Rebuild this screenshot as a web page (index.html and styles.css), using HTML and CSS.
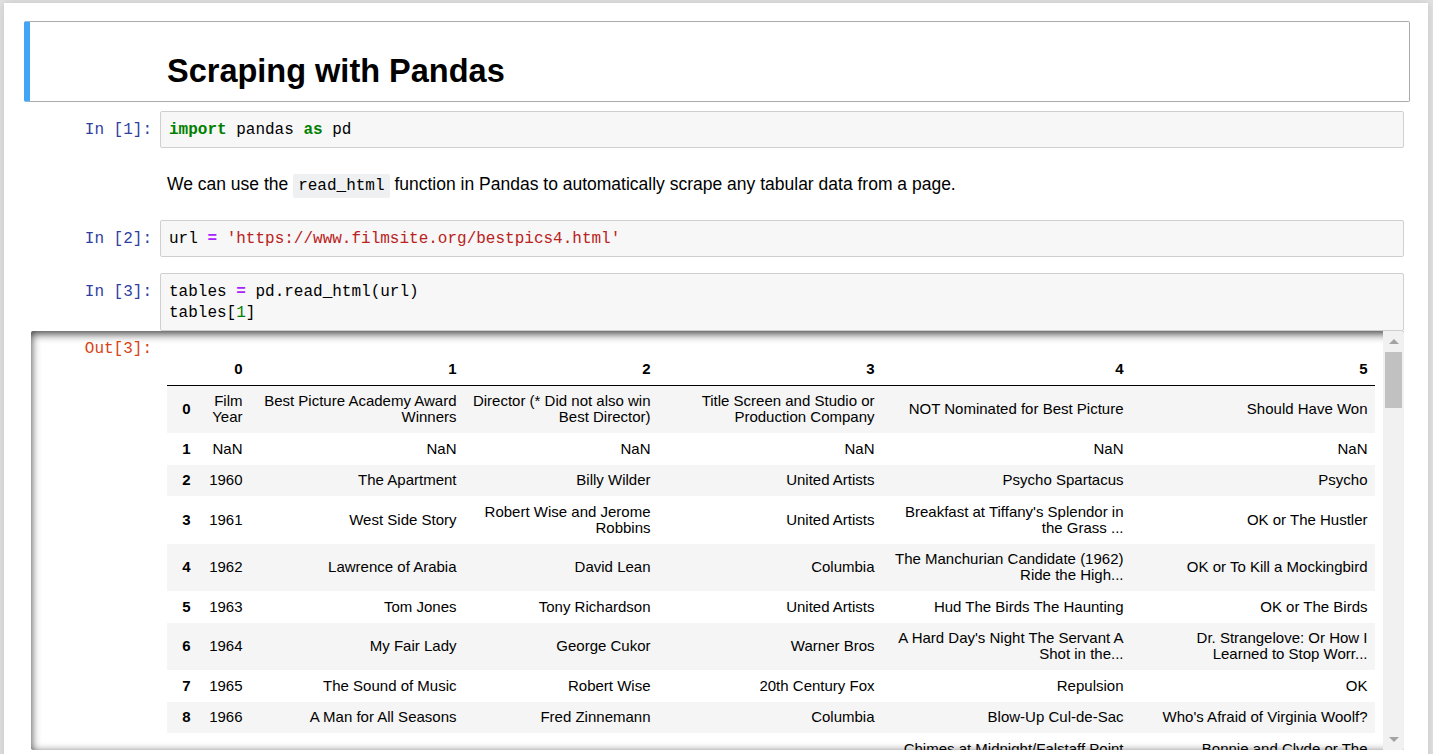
FILE: index.html
```html
<!DOCTYPE html>
<html lang="en">
<head>
<meta charset="utf-8">
<title>Scraping with Pandas</title>
<link rel="stylesheet" href="styles.css">
</head>
<body>
<div class="notebook">
  <div class="cell md selected head-cell">
    <div class="prompt"></div>
    <div class="inner"><h1>Scraping with Pandas</h1></div>
  </div>

  <div class="cell code">
    <div class="row">
      <div class="prompt in">In&nbsp;[1]:</div>
      <div class="input"><pre><span class="kw">import</span> pandas <span class="kw">as</span> pd</pre></div>
    </div>
  </div>

  <div class="cell md">
    <div class="prompt"></div>
    <div class="inner"><p>We can use the <code>read_html</code> function in Pandas to automatically scrape any tabular data from a page.</p></div>
  </div>

  <div class="cell code">
    <div class="row">
      <div class="prompt in">In&nbsp;[2]:</div>
      <div class="input"><pre>url <span class="op">=</span> <span class="str">'https://www.filmsite.org/bestpics4.html'</span></pre></div>
    </div>
  </div>

  <div class="cell code">
    <div class="row">
      <div class="prompt in">In&nbsp;[3]:</div>
      <div class="input"><pre><span class="line">tables <span class="op">=</span> pd.read_html(url)</span><span class="line">tables[<span class="num">1</span>]</span></pre></div>
    </div>
    <div class="output-scroll">
      <div class="output-content">
        <div class="prompt out">Out[3]:</div>
        <div class="subarea">
          <table class="df">
            <colgroup>
              <col class="c-idx"><col class="c0"><col class="c1"><col class="c2"><col class="c3"><col class="c4"><col class="c5">
            </colgroup>
            <thead>
              <tr><th></th><th>0</th><th>1</th><th>2</th><th>3</th><th>4</th><th>5</th></tr>
            </thead>
            <tbody>
              <tr><th>0</th><td>Film Year</td><td>Best Picture Academy Award Winners</td><td>Director (* Did not also win Best Director)</td><td>Title Screen and Studio or Production Company</td><td>NOT Nominated for Best Picture</td><td>Should Have Won</td></tr>
              <tr><th>1</th><td>NaN</td><td>NaN</td><td>NaN</td><td>NaN</td><td>NaN</td><td>NaN</td></tr>
              <tr><th>2</th><td>1960</td><td>The Apartment</td><td>Billy Wilder</td><td>United Artists</td><td>Psycho Spartacus</td><td>Psycho</td></tr>
              <tr><th>3</th><td>1961</td><td>West Side Story</td><td>Robert Wise and Jerome Robbins</td><td>United Artists</td><td>Breakfast at Tiffany's Splendor in the Grass ...</td><td>OK or The Hustler</td></tr>
              <tr><th>4</th><td>1962</td><td>Lawrence of Arabia</td><td>David Lean</td><td>Columbia</td><td>The Manchurian Candidate (1962) Ride the High...</td><td>OK or To Kill a Mockingbird</td></tr>
              <tr><th>5</th><td>1963</td><td>Tom Jones</td><td>Tony Richardson</td><td>United Artists</td><td>Hud The Birds The Haunting</td><td>OK or The Birds</td></tr>
              <tr><th>6</th><td>1964</td><td>My Fair Lady</td><td>George Cukor</td><td>Warner Bros</td><td>A Hard Day's Night The Servant A Shot in the...</td><td>Dr. Strangelove: Or How I Learned to Stop Worr...</td></tr>
              <tr><th>7</th><td>1965</td><td>The Sound of Music</td><td>Robert Wise</td><td>20th Century Fox</td><td>Repulsion</td><td>OK</td></tr>
              <tr><th>8</th><td>1966</td><td>A Man for All Seasons</td><td>Fred Zinnemann</td><td>Columbia</td><td>Blow-Up Cul-de-Sac</td><td>Who's Afraid of Virginia Woolf?</td></tr>
              <tr><th>9</th><td>1967</td><td>In the Heat of the Night</td><td>Norman Jewison</td><td>United Artists</td><td>Chimes at Midnight/Falstaff Point Blank ...</td><td>Bonnie and Clyde or The Graduate...</td></tr>
            </tbody>
          </table>
        </div>
      </div>
      <div class="scrollbar">
        <div class="sb-btn"><span class="arrow-up"></span></div>
        <div class="sb-track"><div class="sb-thumb"></div></div>
        <div class="sb-btn"><span class="arrow-down"></span></div>
      </div>
    </div>
  </div>
</div>
</body>
</html>
```

FILE: styles.css
```css
html, body {
  margin: 0;
  padding: 0;
  height: 100%;
  overflow: hidden;
}
body {
  background: #e4e4e4;
  font-family: "Liberation Sans", Arial, sans-serif;
  color: #000;
}
.notebook {
  background: #fff;
  margin: 3px 5px 0 4px;
  padding: 18px 18px 0 20px;
  min-height: 760px;
  box-shadow: 0 0 10px 1px rgba(87, 87, 87, 0.2);
}

/* cells */
.cell {
  display: flex;
}
.cell.code {
  flex-direction: column;
  padding: 9px 6px 7px 6px;
}
.cell .row {
  display: flex;
}
.prompt {
  width: 130px;
  flex: none;
  box-sizing: border-box;
  font-family: "Liberation Mono", "DejaVu Sans Mono", monospace;
  font-size: 16px;
  line-height: 21px;
  text-align: right;
  padding-right: 8px;
}
.prompt.in {
  color: #303f9f;
  padding-top: 9px;
}
.prompt.out {
  color: #d84315;
  width: 129px;
  padding-top: 7.5px;
}

/* heading cell */
.head-cell {
  border: 1px solid #ababab;
  border-left: 6px solid #42a5f5;
  border-radius: 2px;
}
.head-cell .inner {
  padding: 32.5px 7px 14px 7px;
}
h1 {
  margin: 0;
  font-size: 32.5px;
  line-height: 1;
  font-weight: bold;
}

/* markdown cell */
.cell.md:not(.head-cell) {
  padding: 9px 6px 7px 6px;
}
.cell.md .inner {
  flex: 1;
}
.cell.md:not(.head-cell) .inner {
  padding: 9px 7px 8.5px 7px;
}
.inner p {
  margin: 0;
  font-size: 17.5px;
  line-height: 22.5px;
}
.inner code {
  font-family: "Liberation Mono", "DejaVu Sans Mono", monospace;
  font-size: 16px;
  line-height: 1;
  background: #eff0f1;
  padding: 3px 5px;
  border-radius: 2px;
}

/* code input */
.input {
  flex: 1;
  background: #f7f7f7;
  border: 1px solid #cfcfcf;
  border-radius: 2px;
}
.input pre {
  margin: 0;
  padding: 8px 8px 6px 8px;
  font-family: "Liberation Mono", "DejaVu Sans Mono", monospace;
  font-size: 16px;
  line-height: 21px;
  color: #000;
}
.input pre .line {
  display: block;
}
.kw { color: #008000; font-weight: bold; }
.op { color: #aa22ff; font-weight: bold; }
.str { color: #ba2121; }
.num { color: #008000; }

/* scrolled output */
.output-scroll {
  margin: 0 0 0 1px;
  height: 419px;
  display: flex;
  border-radius: 2px;
  box-shadow: inset 0 2.5px 10px rgba(0, 0, 0, 0.8);
  overflow: hidden;
}
.output-content {
  flex: 1;
  display: flex;
  overflow: hidden;
  min-width: 0;
}
.subarea {
  padding: 7px;
  flex: 1;
}
table.df {
  margin-top: 15px;
  border-collapse: collapse;
  border-spacing: 0;
  table-layout: fixed;
  width: 1208px;
  font-size: 15px;
  color: #000;
}
.c-idx { width: 31px; }
.c0 { width: 52px; }
.c1 { width: 214px; }
.c2 { width: 194px; }
.c3 { width: 224px; }
.c4 { width: 249px; }
.c5 { width: 244px; }
table.df th,
table.df td {
  padding: 7.75px 7.5px;
  line-height: 16px;
  text-align: right;
  vertical-align: middle;
  border: none;
}
table.df th {
  font-weight: bold;
}
table.df thead th {
  border-bottom: 1px solid #000;
}
table.df tbody tr:nth-child(odd) {
  background: #f5f5f5;
}

/* scrollbar */
.scrollbar {
  width: 21px;
  flex: none;
  background: #f1f1f1;
  display: flex;
  flex-direction: column;
}
.sb-btn {
  height: 21px;
  flex: none;
  display: flex;
  align-items: center;
  justify-content: center;
}
.arrow-up {
  width: 0;
  height: 0;
  border-left: 5px solid transparent;
  border-right: 5px solid transparent;
  border-bottom: 5px solid #a3a3a3;
}
.arrow-down {
  width: 0;
  height: 0;
  border-left: 5px solid transparent;
  border-right: 5px solid transparent;
  border-top: 5px solid #a3a3a3;
}
.sb-track {
  flex: 1;
  padding: 0 2px;
}
.sb-thumb {
  height: 56px;
  background: #c1c1c1;
}
```
